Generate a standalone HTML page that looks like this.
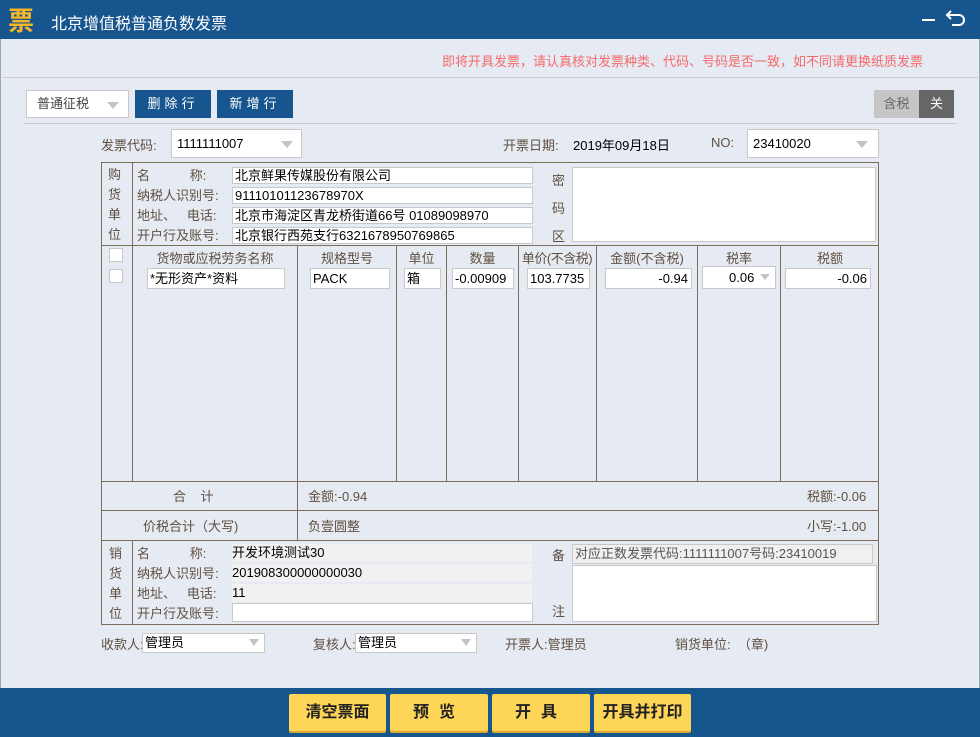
<!DOCTYPE html>
<html><head><meta charset="utf-8"><style>
*{margin:0;padding:0;box-sizing:border-box}
body{width:980px;height:737px;overflow:hidden;background:#e6eaf3;font-family:"Liberation Sans","Noto Sans CJK SC",sans-serif;font-size:13px;color:#000;position:relative}
.a{position:absolute}
.lb{color:#5f5040;white-space:nowrap}
.ln{position:absolute;background:#7d6e5a}
.in{position:absolute;background:#fff;border:1px solid #c8c8c8;height:19px;line-height:17px;padding-left:2px;white-space:nowrap;overflow:hidden}
.g{position:absolute;background:#f1f1f1;height:18px;line-height:18px;white-space:nowrap}
.tri{position:absolute;width:0;height:0;border-left:6px solid transparent;border-right:6px solid transparent;border-top:7px solid #c4c4c4}
.btn{position:absolute;top:694px;height:37px;background:#fdd658;border-radius:2px;font-weight:bold;font-size:16px;text-align:center;line-height:37px;color:#222;box-shadow:0 2px 0 #d9a933}
.hd{position:absolute;top:248px;color:#5f5040;text-align:center}
</style></head><body>
<div class="a" style="left:0;top:0;width:980px;height:39px;background:#17558f"></div>
<div class="a" style="left:8px;top:5px;font-size:26px;font-weight:bold;color:#f7b52a;line-height:30px;font-family:'Noto Sans CJK SC',sans-serif">票</div>
<div class="a" style="left:51px;top:10px;color:#fff;font-size:16px">北京增值税普通负数发票</div>
<div class="a" style="left:922px;top:19px;width:13px;height:2px;background:#fff"></div>
<svg class="a" style="left:945px;top:8px" width="22" height="20"><path d="M6 3 L2 7 L6 11 M2 7 H14 A5 5 0 0 1 14 17 H7" fill="none" stroke="#fff" stroke-width="2"/></svg>
<div class="a" style="left:0;top:39px;width:1px;height:650px;background:#9aa"></div>
<div class="a" style="left:979px;top:39px;width:1px;height:650px;background:#9aa"></div>
<div class="a" style="left:442px;top:51px;color:#f46a6a">即将开具发票，请认真核对发票种类、代码、号码是否一致，如不同请更换纸质发票</div>
<div class="a" style="left:2px;top:77px;width:976px;height:1px;background:#c9ccd3"></div>
<div class="in" style="left:26px;top:90px;width:103px;height:28px;line-height:26px;padding-left:10px;color:#444">普通征税</div><div class="tri" style="left:107px;top:102px"></div>
<div class="a" style="left:135px;top:90px;width:76px;height:28px;background:#17558f;color:#fff;text-align:center;line-height:28px;letter-spacing:4px">删除行</div>
<div class="a" style="left:217px;top:90px;width:76px;height:28px;background:#17558f;color:#fff;text-align:center;line-height:28px;letter-spacing:4px">新增行</div>
<div class="a" style="left:874px;top:90px;width:45px;height:28px;background:#c6c6c6;color:#666;text-align:center;line-height:28px">含税</div>
<div class="a" style="left:919px;top:90px;width:35px;height:28px;background:#666;color:#fff;text-align:center;line-height:28px">关</div>
<div class="a" style="left:23px;top:123px;width:934px;height:1px;background:#c9ccd3"></div>
<div class="a lb" style="left:101px;top:135px">发票代码:</div>
<div class="in" style="left:171px;top:129px;width:131px;height:29px;line-height:27px;padding-left:5px">1111111007</div><div class="tri" style="left:281px;top:141px"></div>
<div class="a lb" style="left:503px;top:135px">开票日期:</div><div class="a" style="left:573px;top:135px">2019年09月18日</div>
<div class="a lb" style="left:711px;top:135px">NO:</div>
<div class="in" style="left:747px;top:129px;width:132px;height:29px;line-height:27px;padding-left:5px">23410020</div><div class="tri" style="left:856px;top:141px"></div>
<div class="a" style="left:101px;top:162px;width:778px;height:463px;border:1px solid #7d6e5a"></div>
<div class="ln" style="left:101px;top:245px;width:778px;height:1px"></div>
<div class="ln" style="left:101px;top:481px;width:778px;height:1px"></div>
<div class="ln" style="left:101px;top:510px;width:778px;height:1px"></div>
<div class="ln" style="left:101px;top:540px;width:778px;height:1px"></div>
<div class="ln" style="left:132px;top:162px;width:1px;height:83px"></div>
<div class="ln" style="left:132px;top:245px;width:1px;height:236px"></div>
<div class="ln" style="left:297px;top:245px;width:1px;height:236px"></div>
<div class="ln" style="left:396px;top:245px;width:1px;height:236px"></div>
<div class="ln" style="left:446px;top:245px;width:1px;height:236px"></div>
<div class="ln" style="left:518px;top:245px;width:1px;height:236px"></div>
<div class="ln" style="left:596px;top:245px;width:1px;height:236px"></div>
<div class="ln" style="left:697px;top:245px;width:1px;height:236px"></div>
<div class="ln" style="left:780px;top:245px;width:1px;height:236px"></div>
<div class="ln" style="left:297px;top:481px;width:1px;height:59px"></div>
<div class="ln" style="left:132px;top:540px;width:1px;height:85px"></div>
<div class="a lb" style="left:108px;top:165px;line-height:20px;width:16px">购<br>货<br>单<br>位</div>
<div class="a lb" style="left:137px;top:166px;line-height:20px">名&nbsp;&nbsp;&nbsp;&nbsp;&nbsp;&nbsp;&nbsp;&nbsp;&nbsp;&nbsp;&nbsp;称:<br>纳税人识别号:<br>地址、&nbsp;&nbsp;&nbsp;电话:<br>开户行及账号:</div>
<div class="in" style="left:232px;top:167px;width:301px;height:17px;line-height:15px">北京鲜果传媒股份有限公司</div>
<div class="in" style="left:232px;top:187px;width:301px;height:17px;line-height:15px">91110101123678970X</div>
<div class="in" style="left:232px;top:207px;width:301px;height:17px;line-height:15px">北京市海淀区青龙桥街道66号 01089098970</div>
<div class="in" style="left:232px;top:227px;width:301px;height:17px;line-height:15px">北京银行西苑支行6321678950769865</div>
<div class="a lb" style="left:552px;top:167px;line-height:28px">密<br>码<br>区</div>
<div class="in" style="left:572px;top:167px;width:304px;height:75px"></div>
<div class="in" style="left:109px;top:248px;width:14px;height:14px"></div>
<div class="in" style="left:109px;top:269px;width:14px;height:14px"></div>
<div class="hd" style="left:133px;width:164px">货物或应税劳务名称</div>
<div class="hd" style="left:298px;width:98px">规格型号</div>
<div class="hd" style="left:397px;width:49px">单位</div>
<div class="hd" style="left:447px;width:71px">数量</div>
<div class="hd" style="left:518px;width:78px;letter-spacing:-0.5px">单价(不含税)</div>
<div class="hd" style="left:597px;width:100px">金额(不含税)</div>
<div class="hd" style="left:698px;width:82px">税率</div>
<div class="hd" style="left:781px;width:98px">税额</div>
<div class="in" style="left:147px;top:268px;width:138px;height:21px;line-height:19px">*无形资产*资料</div>
<div class="in" style="left:310px;top:268px;width:80px;height:21px;line-height:19px">PACK</div>
<div class="in" style="left:404px;top:268px;width:37px;height:21px;line-height:19px">箱</div>
<div class="in" style="left:452px;top:268px;width:62px;height:21px;line-height:19px">-0.00909</div>
<div class="in" style="left:527px;top:268px;width:63px;height:21px;line-height:19px">103.7735</div>
<div class="in" style="left:605px;top:268px;width:87px;height:21px;line-height:19px;text-align:right;padding-right:3px">-0.94</div>
<div class="in" style="left:702px;top:266px;width:74px;height:23px;line-height:21px;padding-left:26px">0.06</div><div class="tri" style="left:760px;top:274px;border-width:6px 5px 0"></div>
<div class="in" style="left:785px;top:268px;width:86px;height:21px;line-height:19px;text-align:right;padding-right:3px">-0.06</div>
<div class="a lb" style="left:173px;top:486px">合&nbsp;&nbsp;&nbsp;&nbsp;计</div>
<div class="a lb" style="left:308px;top:486px">金额:-0.94</div>
<div class="a lb" style="left:807px;top:486px">税额:-0.06</div>
<div class="a lb" style="left:143px;top:516px">价税合计（大写)</div>
<div class="a lb" style="left:308px;top:516px">负壹圆整</div>
<div class="a lb" style="left:807px;top:516px">小写:-1.00</div>
<div class="a lb" style="left:109px;top:544px;line-height:20px;width:16px">销<br>货<br>单<br>位</div>
<div class="a lb" style="left:137px;top:544px;line-height:20px">名&nbsp;&nbsp;&nbsp;&nbsp;&nbsp;&nbsp;&nbsp;&nbsp;&nbsp;&nbsp;&nbsp;称:<br>纳税人识别号:<br>地址、&nbsp;&nbsp;&nbsp;电话:<br>开户行及账号:</div>
<div class="g" style="left:232px;top:544px;width:300px">开发环境测试30</div>
<div class="g" style="left:232px;top:564px;width:300px">201908300000000030</div>
<div class="g" style="left:232px;top:584px;width:300px">11</div>
<div class="in" style="left:232px;top:603px;width:301px;height:19px"></div>
<div class="a lb" style="left:552px;top:545px">备</div>
<div class="a lb" style="left:552px;top:601px">注</div>
<div class="in" style="left:572px;top:544px;width:301px;height:20px;background:#f0f0f0;color:#555;line-height:18px">对应正数发票代码:1111111007号码:23410019</div>
<div class="in" style="left:572px;top:565px;width:305px;height:57px"></div>
<div class="a lb" style="left:101px;top:634px">收款人:</div>
<div class="in" style="left:142px;top:633px;width:123px;height:20px;line-height:18px;color:#000">管理员</div><div class="tri" style="left:249px;top:639px;border-width:7px 5px 0"></div>
<div class="a lb" style="left:313px;top:634px">复核人:</div>
<div class="in" style="left:355px;top:633px;width:122px;height:20px;line-height:18px;color:#000">管理员</div><div class="tri" style="left:461px;top:639px;border-width:7px 5px 0"></div>
<div class="a lb" style="left:505px;top:634px">开票人:管理员</div>
<div class="a lb" style="left:675px;top:634px">销货单位:&nbsp;&nbsp;（章)</div>
<div class="a" style="left:0;top:688px;width:980px;height:49px;background:#17558f"></div>
<div class="btn" style="left:289px;width:97px">清空票面</div>
<div class="btn" style="left:390px;width:98px;letter-spacing:10px">预览</div>
<div class="btn" style="left:492px;width:98px;letter-spacing:10px">开具</div>
<div class="btn" style="left:594px;width:97px">开具并打印</div>
</body></html>
